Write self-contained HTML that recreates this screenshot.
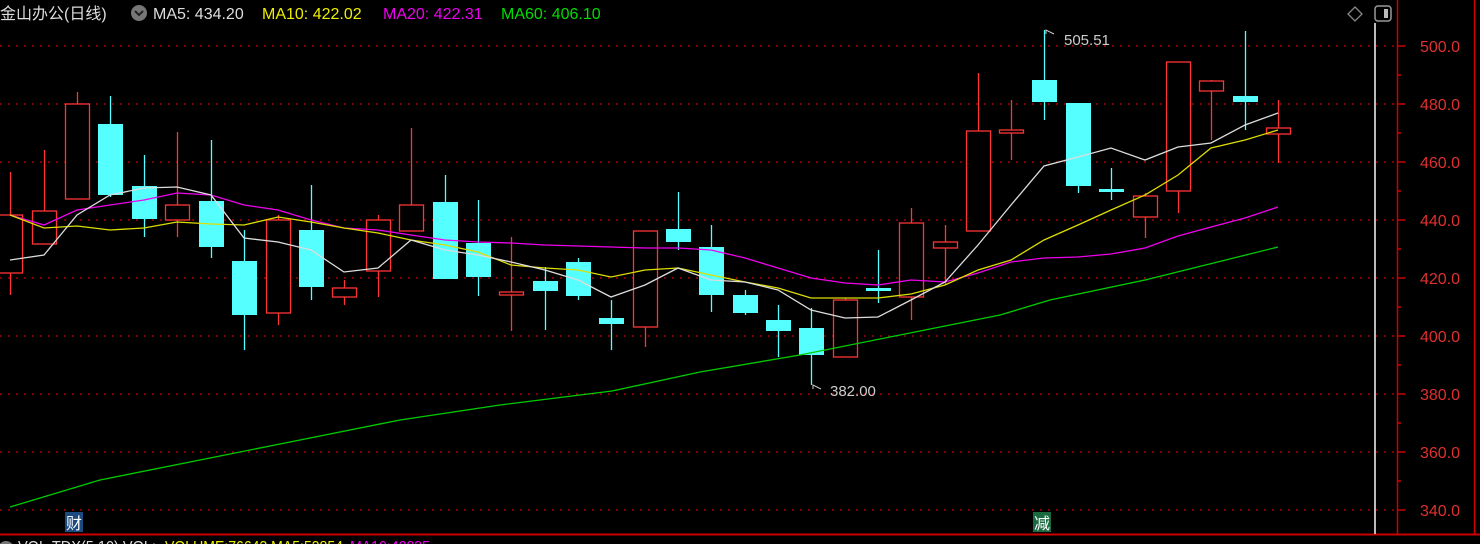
<!DOCTYPE html><html><head><meta charset="utf-8"><style>
html,body{margin:0;padding:0;background:#000;width:1480px;height:544px;overflow:hidden}
svg{display:block}
text{font-family:"Liberation Sans","Noto Sans CJK SC",sans-serif}
</style></head><body>
<svg width="1480" height="544" viewBox="0 0 1480 544">
<g stroke="#a00" stroke-dasharray="2,6" stroke-width="1.5">
<line x1="0" y1="46" x2="1396" y2="46"/><line x1="0" y1="104" x2="1396" y2="104"/><line x1="0" y1="162" x2="1396" y2="162"/><line x1="0" y1="220" x2="1396" y2="220"/><line x1="0" y1="278" x2="1396" y2="278"/><line x1="0" y1="336" x2="1396" y2="336"/><line x1="0" y1="394" x2="1396" y2="394"/><line x1="0" y1="452" x2="1396" y2="452"/><line x1="0" y1="510" x2="1396" y2="510"/>
</g>
<line x1="1397.5" y1="0" x2="1397.5" y2="534" stroke="#c00" stroke-width="1.5"/>
<line x1="1474.5" y1="0" x2="1474.5" y2="534" stroke="#c00" stroke-width="1.5"/>
<line x1="0" y1="534.5" x2="1480" y2="534.5" stroke="#c00" stroke-width="2"/>
<line x1="1375" y1="23" x2="1375" y2="534" stroke="#bbb" stroke-width="2"/>
<rect x="1375" y="6" width="16" height="15" rx="3" fill="none" stroke="#999" stroke-width="1.5"/><rect x="1384" y="9" width="4" height="9" fill="#bbb"/>
<path d="M1355 7 l7 7 l-7 7 l-7 -7z" fill="none" stroke="#888" stroke-width="1.3"/>
<g stroke="#c00" stroke-width="1.5">
<line x1="1397" y1="46" x2="1405" y2="46"/><line x1="1397" y1="104" x2="1405" y2="104"/><line x1="1397" y1="162" x2="1405" y2="162"/><line x1="1397" y1="220" x2="1405" y2="220"/><line x1="1397" y1="278" x2="1405" y2="278"/><line x1="1397" y1="336" x2="1405" y2="336"/><line x1="1397" y1="394" x2="1405" y2="394"/><line x1="1397" y1="452" x2="1405" y2="452"/><line x1="1397" y1="510" x2="1405" y2="510"/>
<line x1="1397" y1="75" x2="1401" y2="75"/><line x1="1397" y1="133" x2="1401" y2="133"/><line x1="1397" y1="191" x2="1401" y2="191"/><line x1="1397" y1="249" x2="1401" y2="249"/><line x1="1397" y1="307" x2="1401" y2="307"/><line x1="1397" y1="365" x2="1401" y2="365"/><line x1="1397" y1="423" x2="1401" y2="423"/><line x1="1397" y1="481" x2="1401" y2="481"/>
</g>
<g fill="#e03030" font-size="16">
<text x="1420" y="52">500.0</text><text x="1420" y="110">480.0</text><text x="1420" y="168">460.0</text><text x="1420" y="226">440.0</text><text x="1420" y="284">420.0</text><text x="1420" y="342">400.0</text><text x="1420" y="400">380.0</text><text x="1420" y="458">360.0</text><text x="1420" y="516">340.0</text>
</g>
<g id="c"></g>
<polyline fill="none" stroke="#0c0" stroke-width="1.3" points="10,507 100,480 200,460 300,440 400,420 500,405 612,391 700,372 800,355 900,335 1000,315 1050,300 1145,280 1278,247"/>
<polyline fill="none" stroke="#e0e" stroke-width="1.3" points="10,215 44,225 77,210 110,205 144,200 177,193 211,195 244,205 278,210 311,220 344,228 378,230 411,235 445,240 478,242 511,243 545,245 578,246 611,247 645,248 678,248 711,250 745,258 778,268 811,278 845,283 878,285 911,280 945,282 978,273 1011,262 1044,258 1078,257 1111,254 1145,248 1178,236 1211,227 1245,218 1278,207"/>
<polyline fill="none" stroke="#dd0" stroke-width="1.3" points="10,215 44,228 77,226 110,230 144,228 177,222 211,224 244,225 278,217 311,222 344,228 378,233 411,240 445,245 478,252 511,265 545,268 578,270 611,277 645,270 678,268 711,275 745,282 778,288 811,298 845,298 878,298 911,294 945,285 978,270 1011,260 1044,240 1078,225 1111,210 1145,195 1178,175 1211,148 1245,140 1278,130"/>
<polyline fill="none" stroke="#ddd" stroke-width="1.3" points="10,260 44,255 77,215 110,195 144,188 177,187 211,195 244,238 278,242 311,250 344,272 378,268 411,240 445,250 478,255 511,262 545,270 578,280 611,297 645,285 678,268 711,280 745,282 778,290 811,310 845,318 878,317 911,300 945,282 978,245 1011,205 1044,166 1078,157 1111,148 1145,160 1178,147 1211,143 1245,125 1278,113"/>
<g fill="#ccc" font-size="15">
<path d="M1054 34 l-8 -4 l0 4" fill="none" stroke="#ccc"/><text x="1064" y="45">505.51</text>
<path d="M821 389 l-8 -4 l0 4" fill="none" stroke="#ccc"/><text x="830" y="396">382.00</text>
</g>
<rect x="65" y="512" width="18" height="20" fill="#1a4a80"/><text x="66" y="529" fill="#fff" font-size="16">财</text>
<rect x="1033" y="512" width="18" height="20" fill="#1a6a40"/><text x="1034" y="529" fill="#fff" font-size="16">减</text>
<g font-size="16">
<text x="0" y="19" fill="#ddd">金山办公(日线)</text>
<circle cx="139" cy="13" r="8" fill="#777"/><path d="M135 11 l4 4 l4 -4" fill="none" stroke="#222" stroke-width="2"/>
<text x="153" y="19" fill="#ddd">MA5: 434.20</text>
<text x="262" y="19" fill="#ee0">MA10: 422.02</text>
<text x="383" y="19" fill="#e0e">MA20: 422.31</text>
<text x="501" y="19" fill="#0d0">MA60: 406.10</text>
<circle cx="6" cy="549" r="8" fill="#777"/>
<text x="18" y="552" fill="#ddd" textLength="138" lengthAdjust="spacingAndGlyphs">VOL-TDX(5,10) VOL:</text>
<text x="165" y="552" fill="#ee0" textLength="178" lengthAdjust="spacingAndGlyphs">VOLUME:76643 MA5:53854</text>
<text x="350" y="552" fill="#e0e" textLength="80" lengthAdjust="spacingAndGlyphs">MA10:42835</text>
</g>
</svg>
<script>
var d=[[10,'r',215,273,172,295],[44,'r',211,244,150,244],[77,'r',104,199,92,199],[110,'c',124,195,96,197],[144,'c',186,219,155,237],[177,'r',205,220,132,237],[211,'c',201,247,140,258],[244,'c',261,315,230,350],[278,'r',220,313,215,325],[311,'c',230,287,185,300],[344,'r',288,297,280,305],[378,'r',220,271,215,297],[411,'r',205,231,128,231],[445,'c',202,279,175,279],[478,'c',243,277,200,296],[511,'r',292,295,237,331],[545,'c',281,291,267,330],[578,'c',262,296,258,300],[611,'c',318,324,300,350],[645,'r',231,327,231,347],[678,'c',229,242,192,250],[711,'c',247,295,225,312],[745,'c',295,313,290,315],[778,'c',320,331,305,357],[811,'c',328,355,308,385],[845,'r',300,357,298,357],[878,'c',288,291,250,303],[911,'r',223,297,208,320],[945,'r',242,248,225,285],[978,'r',131,231,73,231],[1011,'r',130,133,100,160],[1044,'c',80,102,30,120],[1078,'c',103,186,103,193],[1111,'c',189,191,168,200],[1145,'r',196,217,193,238],[1178,'r',62,191,62,213],[1211,'r',81,91,80,140],[1245,'c',96,102,31,130],[1278,'r',128,134,100,163]];
var s='';
d.forEach(function(k){var x=k[0],col=k[1]=='r'?'#f33':'#5ff';
s+='<line x1="'+(x+.5)+'" y1="'+k[4]+'" x2="'+(x+.5)+'" y2="'+k[2]+'" stroke="'+col+'" stroke-width="1.3"/>';
s+='<line x1="'+(x+.5)+'" y1="'+k[3]+'" x2="'+(x+.5)+'" y2="'+k[5]+'" stroke="'+col+'" stroke-width="1.3"/>';
if(k[1]=='r')s+='<rect x="'+(x-11.5)+'" y="'+k[2]+'" width="24" height="'+Math.max(2,k[3]-k[2])+'" fill="#000" stroke="#f33" stroke-width="1.3"/>';
else s+='<rect x="'+(x-12)+'" y="'+k[2]+'" width="25" height="'+Math.max(3,k[3]-k[2])+'" fill="#5ff"/>';});
document.getElementById('c').innerHTML=s;
</script>
</body></html>
